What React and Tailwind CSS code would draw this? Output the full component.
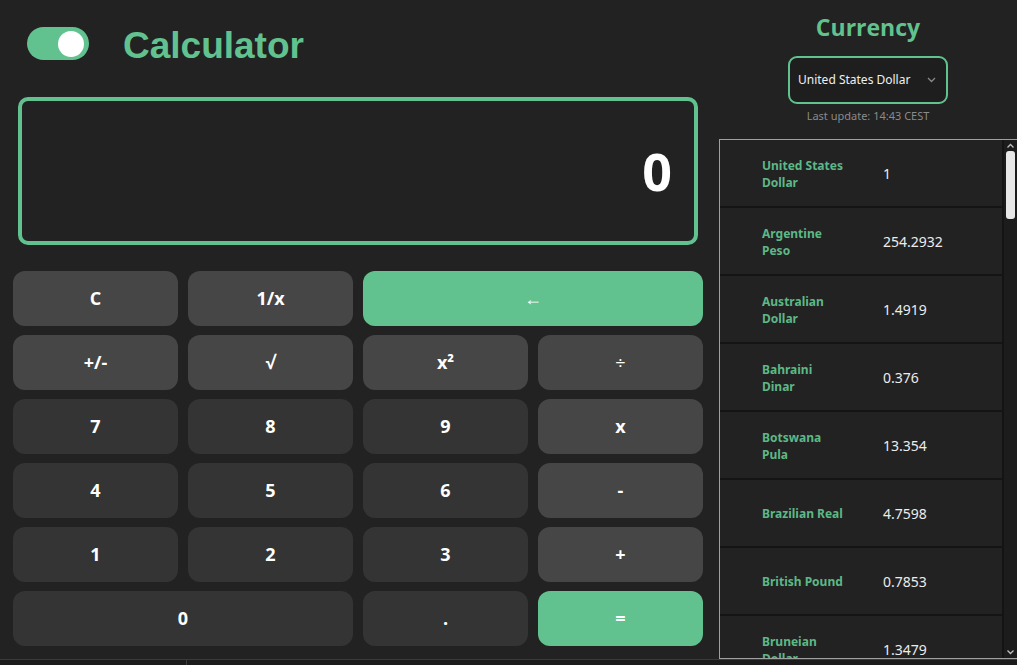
import React, { useState } from "react";

const GREEN = "bg-[#61c28f]";

const keys = [
  { label: "C", tone: "op" },
  { label: "1/x", tone: "op" },
  { label: "←", tone: "accent", span: true, thin: true },
  { label: "+/-", tone: "op" },
  { label: "√", tone: "op" },
  { label: "x²", tone: "op" },
  { label: "÷", tone: "op", thin: true },
  { label: "7", tone: "num" },
  { label: "8", tone: "num" },
  { label: "9", tone: "num" },
  { label: "x", tone: "op" },
  { label: "4", tone: "num" },
  { label: "5", tone: "num" },
  { label: "6", tone: "num" },
  { label: "-", tone: "op" },
  { label: "1", tone: "num" },
  { label: "2", tone: "num" },
  { label: "3", tone: "num" },
  { label: "+", tone: "op" },
  { label: "0", tone: "num", span: true },
  { label: ".", tone: "num" },
  { label: "=", tone: "accent" },
];

const rates = [
  { name: "United States Dollar", value: "1" },
  { name: "Argentine Peso", value: "254.2932" },
  { name: "Australian Dollar", value: "1.4919" },
  { name: "Bahraini Dinar", value: "0.376" },
  { name: "Botswana Pula", value: "13.354" },
  { name: "Brazilian Real", value: "4.7598" },
  { name: "British Pound", value: "0.7853" },
  { name: "Bruneian Dollar", value: "1.3479" },
];

const toneClass = {
  op: "bg-[#464646]",
  num: "bg-[#343434]",
  accent: GREEN,
};

const Calculator = () => {
  const [display] = useState("0");

  return (
    <div className="w-[719px] flex flex-col">
      {/* header: toggle + title */}
      <div className="flex items-center pt-[27px] pl-[27px] h-[60px]">
        <div className="w-[62px] h-[33px] rounded-full bg-[#61c28f] flex items-center justify-end pr-[5px]">
          <div className="w-[26px] h-[26px] rounded-full bg-white" />
        </div>
        <h1 className="ml-[34px] mt-[3px] text-[37px] font-bold text-[#61c28f] font-['Liberation_Sans',Arial,sans-serif] leading-none">
          Calculator
        </h1>
      </div>

      {/* display */}
      <div className="ml-[18px] mt-[37px] w-[680px] h-[148px] border-4 border-[#61c28f] rounded-[10px] flex items-center justify-end pr-[22px]">
        <span className="text-[52px] font-bold text-white font-['Open_Sans',sans-serif] leading-none">
          {display}
        </span>
      </div>

      {/* keypad */}
      <div className="ml-[13px] mt-[26px] w-[690px] grid grid-cols-4 gap-x-[10px] gap-y-[9px]">
        {keys.map((k) => (
          <button
            key={k.label}
            className={`${toneClass[k.tone]} ${
              k.span ? "col-span-2" : ""
            } h-[55px] rounded-[12px] text-white text-[18px] ${
              k.thin ? "font-normal" : "font-bold"
            } font-['Open_Sans',sans-serif] flex items-center justify-center`}
          >
            {k.label}
          </button>
        ))}
      </div>
    </div>
  );
};

const CurrencyPanel = () => (
  <div className="flex-1 flex flex-col items-center font-['Open_Sans',sans-serif]">
    <h2 className="mt-[10px] text-[23px] font-bold text-[#61c28f] leading-[34px]">
      Currency
    </h2>
    <div className="mt-[12px] w-[160px] h-[48px] border-2 border-[#61c28f] rounded-[9px] bg-[#1e1e1e] flex items-center justify-between pl-[8px] pr-[10px]">
      <span className="text-[12px] text-[#f0f0f0] font-['Noto_Sans',sans-serif]">
        United States Dollar
      </span>
      <svg width="9" height="6" viewBox="0 0 9 6">
        <path d="M1 1 L4.5 4.5 L8 1" stroke="#8a8a8a" strokeWidth="1.3" fill="none" />
      </svg>
    </div>
    <p className="mt-[4px] text-[11px] text-[#8a8a8a] font-['Noto_Sans',sans-serif] leading-[16px]">
      Last update: 14:43 CEST
    </p>

    {/* rate table */}
    <div className="mt-[15px] w-full h-[521px] border border-[#a0a0a0] border-r-0 flex overflow-hidden">
      <div className="flex-1 flex flex-col border-r-2 border-[#141414] overflow-hidden">
        {rates.map((r) => (
          <div
            key={r.name}
            className="shrink-0 h-[68px] border-b-2 border-[#141414] flex items-center pl-[42px] pt-[2px]"
          >
            <div className="w-[121px]">
              <div className="w-[82px] text-[12px] font-bold text-[#5db887] leading-[17px] font-['Noto_Sans',sans-serif]">
                {r.name}
              </div>
            </div>
            <span className="text-[14px] text-[#ececec] font-['Noto_Sans',sans-serif]">
              {r.value}
            </span>
          </div>
        ))}
      </div>
      {/* scrollbar */}
      <div className="w-[13px] bg-[#1c1c1c] flex flex-col items-center">
        <svg width="9" height="8" viewBox="0 0 9 8" className="mt-[2px]">
          <path d="M1.5 5.5 L4.5 2.5 L7.5 5.5" stroke="#bdbdbd" strokeWidth="1.3" fill="none" />
        </svg>
        <div className="mt-[1px] w-[9px] h-[68px] rounded-[3px] bg-[#e8e8e8]" />
        <div className="flex-1" />
        <svg width="9" height="8" viewBox="0 0 9 8" className="mb-[2px]">
          <path d="M1.5 2.5 L4.5 5.5 L7.5 2.5" stroke="#bdbdbd" strokeWidth="1.3" fill="none" />
        </svg>
      </div>
    </div>
  </div>
);

const App = () => {
  return (
    <div className="w-[1017px] h-[665px] bg-[#222222] flex flex-col overflow-hidden">
      <div className="flex h-[659px]">
        <Calculator />
        <CurrencyPanel />
      </div>
      <div className="flex-1 border-t border-[#3a3a3a] bg-[#1b1b1b] flex">
        <div className="w-[187px] border-r border-[#3a3a3a]" />
      </div>
    </div>
  );
};

export default App;
